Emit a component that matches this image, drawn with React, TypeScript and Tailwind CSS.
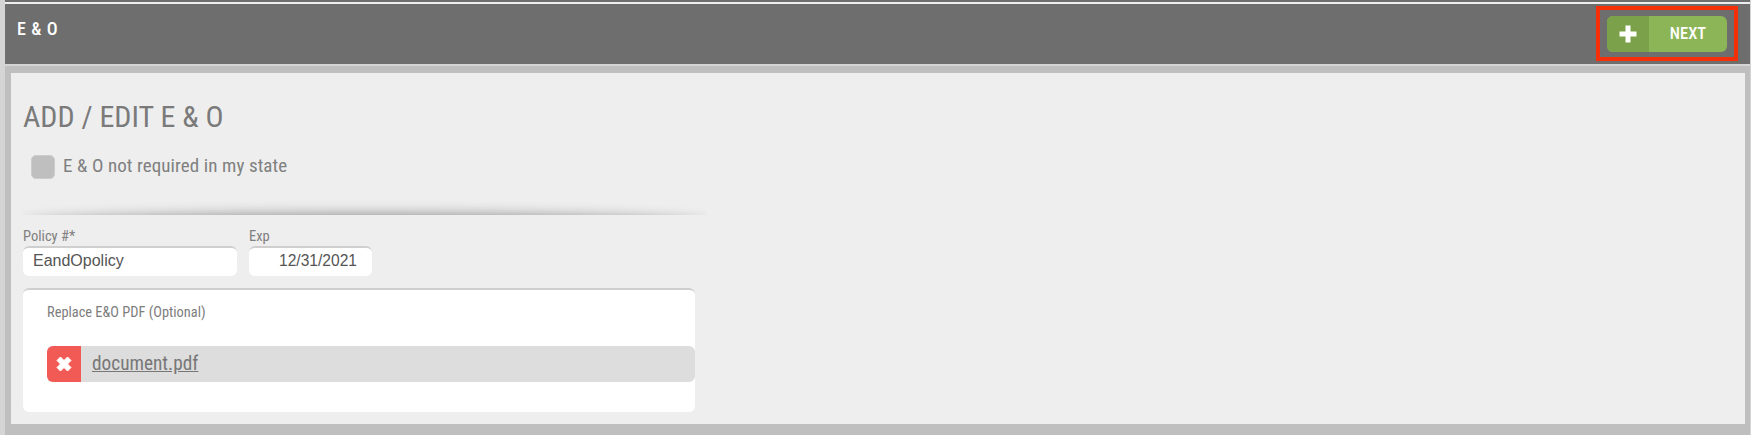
const condensed = "font-['Roboto',sans-serif] [font-stretch:75%]";
const inputText = "font-['Liberation_Sans',sans-serif] leading-[26px] text-[#555555]";

function TopBar() {
  return (
    <div className="h-[64px] bg-[#6e6e6e] flex flex-col">
      <div className="h-[2px] mt-[2px] bg-[#eeeeee] shrink-0" />
      <div className="flex flex-1 justify-between pt-[2px] pr-[12px]">
        <div className={`text-white text-[18px] tracking-[0.6px] leading-[20px] mt-[13px] ml-[12px] font-medium ${condensed}`}>E &amp; O</div>
        <div className="w-[142px] h-[55px] border-[4px] border-[#f52f08] flex items-center justify-center">
          <button className="w-[120px] h-[36px] rounded-[6px] overflow-hidden flex bg-[#8bb556] text-white">
            <span className="w-[42px] h-full bg-[#7ba24b] flex items-center justify-center">
              <svg width="18" height="18" viewBox="0 0 18 18"><path d="M6.5 0.5h5v6h6v5h-6v6h-5v-6h-6v-5h6z" fill="#fff" /></svg>
            </span>
            <span className={`flex-1 text-center text-[16.5px] leading-[36px] font-medium ${condensed}`}>NEXT</span>
          </button>
        </div>
      </div>
    </div>
  );
}

function FileCard() {
  return (
    <div className="w-[672px] h-[124px] mt-[12px] bg-white rounded-[6px] border-t-[2px] border-[#cfcfcf] pt-[14px] pl-[24px]">
      <div className={`text-[14.4px] leading-[18px] text-[#7d7d7d] ${condensed}`}>Replace E&amp;O PDF (Optional)</div>
      <div className="mt-[24px] h-[36px] flex bg-[#dddddd] rounded-[6px]">
        <span className="w-[34px] h-full bg-[#f25a55] rounded-l-[6px] flex items-center justify-center">
          <svg width="16" height="16" viewBox="0 0 16 16"><path d="M1 4.5l3.5-3.5 3.5 3.5 3.5-3.5 3.5 3.5-3.5 3.5 3.5 3.5-3.5 3.5-3.5-3.5-3.5 3.5-3.5-3.5 3.5-3.5z" fill="#fff" stroke="#fff" strokeLinejoin="round" /></svg>
        </span>
        <a className={`ml-[11px] text-[19.3px] leading-[36px] underline text-[#777777] ${condensed}`}>document.pdf</a>
      </div>
    </div>
  );
}

export default function App() {
  return (
    <div className="w-[1751px] h-[435px] overflow-hidden bg-[#bfbfbf] border-l-[5px] border-r-[1px] border-[#d5d5d5]">
      <TopBar />
      <div className="h-[2px] bg-[#d5d5d5]" />
      <div className="pt-[7px] pl-[6px] pr-[5px]">
        <div className="h-[351px] bg-[#eeeeee] pl-[12px]">
          <h1 className={`pt-[25px] text-[30px] leading-[38px] text-[#7a7a7a] font-normal ${condensed}`}>ADD / EDIT E &amp; O</h1>
          <label className="flex items-center mt-[18px] ml-[8px]">
            <span className="w-[24px] h-[24px] rounded-[5px] bg-[#bfbfbf] border border-[#cccccc]" />
            <span className={`ml-[8px] mb-[2px] text-[19px] tracking-[0.1px] leading-[24px] text-[#808080] ${condensed}`}>E &amp; O not required in my state</span>
          </label>
          <div className="w-[684px] h-[20px] mt-[15px] overflow-hidden">
            <div className="mt-[20px] h-[20px] rounded-[50%] shadow-[0_0_14px_rgba(0,0,0,0.45)]" />
          </div>
          <div className="flex gap-[12px] mt-[14px]">
            <div className="w-[214px]">
              <div className={`text-[14.5px] leading-[16px] text-[#808080] ${condensed}`}>Policy #*</div>
              <div className={`h-[30px] mt-[1px] bg-white rounded-[6px] border-t-[2px] border-[#cfcfcf] pl-[10px] text-[16px] ${inputText}`}>EandOpolicy</div>
            </div>
            <div className="w-[123px]">
              <div className={`text-[14.5px] leading-[16px] text-[#808080] ${condensed}`}>Exp</div>
              <div className={`h-[30px] mt-[1px] bg-white rounded-[6px] border-t-[2px] border-[#cfcfcf] pl-[30px] text-[15.6px] ${inputText}`}>12/31/2021</div>
            </div>
          </div>
          <FileCard />
        </div>
      </div>
    </div>
  );
}
